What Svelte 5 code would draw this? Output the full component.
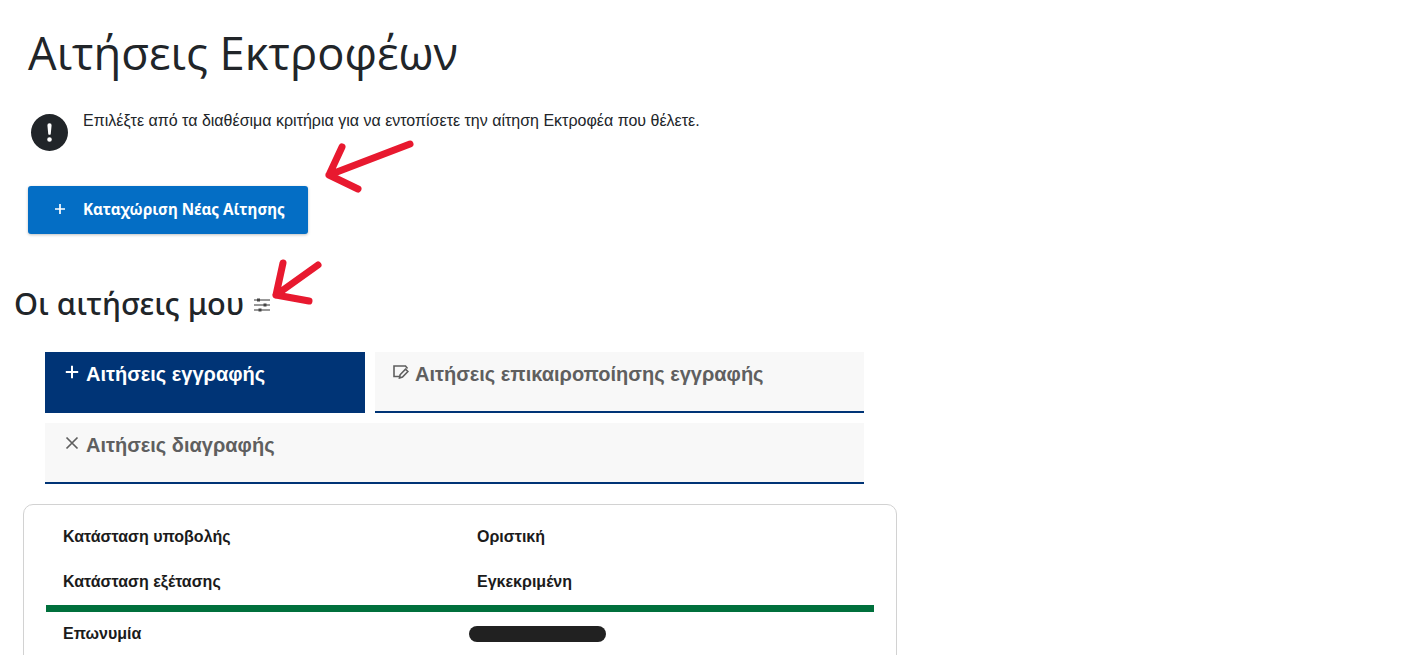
<script>
  const tabs = [
    { label: "Αιτήσεις εγγραφής", icon: "plus", active: true, wide: false },
    { label: "Αιτήσεις επικαιροποίησης εγγραφής", icon: "edit", active: false, wide: false },
    { label: "Αιτήσεις διαγραφής", icon: "x", active: false, wide: true },
  ];
</script>

<div class="page">
  <h1>Αιτήσεις Εκτροφέων</h1>

  <div class="notice">
    <svg class="notice-icon" viewBox="0 0 16 16" width="37" height="37">
      <path fill="#212529" d="M16 8A8 8 0 1 1 0 8a8 8 0 0 1 16 0zM8 4a.905.905 0 0 0-.9.995l.35 3.507a.552.552 0 0 0 1.1 0l.35-3.507A.905.905 0 0 0 8 4zm.002 6a1 1 0 1 0 0 2 1 1 0 0 0 0-2z" />
    </svg>
    <p>Επιλέξτε από τα διαθέσιμα κριτήρια για να εντοπίσετε την αίτηση Εκτροφέα που θέλετε.</p>
  </div>

  <button class="add-btn">
    <svg viewBox="0 0 12 12" width="12" height="12">
      <path d="M6 1v10M1 6h10" stroke="#fff" stroke-width="1.7" fill="none" />
    </svg>
    <span>Καταχώριση Νέας Αίτησης</span>
  </button>

  <h2>
    Οι αιτήσεις μου
    <svg class="sliders" viewBox="0 0 16 14" width="16" height="14">
      <g stroke="#333" stroke-width="1" fill="none">
        <path d="M0 2h16M0 7h16M0 12h16" />
      </g>
      <g fill="#444">
        <rect x="3" y="0.5" width="3" height="3" />
        <rect x="9.5" y="5.5" width="3" height="3" />
        <rect x="4.5" y="10.5" width="3" height="3" />
      </g>
    </svg>
  </h2>

  <div class="tabs">
    {#each tabs as tab}
      <div class="tab" class:active={tab.active} class:wide={tab.wide}>
        {#if tab.icon === "plus"}
          <svg viewBox="0 0 14 14" width="14" height="14">
            <path d="M7 .8v12.4M.8 7h12.4" stroke="#fff" stroke-width="2" fill="none" />
          </svg>
        {:else if tab.icon === "edit"}
          <svg class="edit" viewBox="0 0 16 14" width="16" height="14">
            <path d="M8 11.5H1V1h11.5l2 2.5" stroke="#5f5f5f" stroke-width="1.6" fill="none" />
            <path d="M6.5 13l.6-3.2 5.4-5.6 2.4 2.3-5.4 5.6z" stroke="#5f5f5f" stroke-width="1.6" fill="#f8f8f8" />
          </svg>
        {:else}
          <svg viewBox="0 0 14 14" width="14" height="14">
            <path d="M1.5 1.5l11 11M12.5 1.5l-11 11" stroke="#5f5f5f" stroke-width="1.7" fill="none" />
          </svg>
        {/if}
        <span>{tab.label}</span>
      </div>
    {/each}
  </div>

  <div class="card">
    <div class="row first"><b>Κατάσταση υποβολής</b><b>Οριστική</b></div>
    <div class="row second"><b>Κατάσταση εξέτασης</b><b>Εγκεκριμένη</b></div>
    <div class="status-bar"></div>
    <div class="row last"><b>Επωνυμία</b><span class="redacted"></span></div>
  </div>

  <!-- annotation arrows drawn over the screenshot -->
  <svg class="arrows" viewBox="0 0 1413 655" width="1413" height="655">
    <g stroke="#e8192f" stroke-width="7" stroke-linecap="round" stroke-linejoin="round" fill="none">
      <path d="M410 144L329 175M342 147L329 175L358 189" />
      <path d="M318 265L276 295M283 263L276 295L309 301" />
    </g>
  </svg>
</div>

<style>
  :global(body) {
    margin: 0;
    background: #fff;
  }
  .page {
    position: relative;
    height: 655px;
    overflow: hidden;
    font-family: "Liberation Sans", Arial, sans-serif;
    color: #212529;
  }
  h1 {
    margin: 0;
    padding: 24px 0 0 28px;
    font-family: "Open Sans", sans-serif;
    font-size: 45.3px;
    font-weight: 400;
    line-height: 58px;
  }
  .notice {
    display: flex;
    align-items: flex-start;
    gap: 15px;
    margin: 31px 0 0 31px;
    height: 73px;
  }
  .notice-icon {
    flex: none;
    margin-top: 1px;
  }
  .notice p {
    margin: 0;
    font-size: 16px;
    line-height: 16px;
  }
  .add-btn {
    display: flex;
    align-items: center;
    gap: 17px;
    width: 280px;
    height: 48px;
    margin: 0 0 0 28px;
    padding: 0 0 0 26px;
    border: none;
    border-radius: 3px;
    background: #046ec5;
    color: #fff;
    font-family: "Noto Sans", sans-serif;
    font-size: 15.2px;
    font-weight: 700;
    box-shadow: 0 1px 3px rgba(0, 0, 0, 0.25);
  }
  .add-btn span {
    margin-top: -2px;
  }
  .add-btn svg {
    margin-top: -3px;
  }
  h2 {
    display: flex;
    align-items: center;
    gap: 10px;
    margin: 47px 0 0 14px;
    font-family: "Noto Sans", sans-serif;
    font-size: 30.7px;
    font-weight: 500;
    line-height: 44px;
  }
  .sliders {
    margin-top: 4px;
  }
  .tabs {
    display: grid;
    grid-template-columns: 320px 489px;
    gap: 10px;
    margin: 27px 0 0 45px;
  }
  .tab {
    display: flex;
    align-items: flex-start;
    gap: 7px;
    height: 61px;
    box-sizing: border-box;
    padding: 10px 0 0 20px;
    background: #f8f8f8;
    border-bottom: 2px solid #003476;
    color: #5f5f5f;
    font-size: 20px;
    font-weight: 700;
    line-height: 24px;
  }
  .tab svg {
    margin-top: 3px;
    flex: none;
  }
  .tab svg.edit {
    margin: 3px -1px 0 -2px;
  }
  .tab.active {
    background: #003476;
    color: #fff;
  }
  .tab.wide {
    grid-column: 1 / span 2;
  }
  .card {
    width: 828px;
    height: 200px;
    margin: 20px 0 0 23px;
    border: 1px solid #d2d2d2;
    border-radius: 10px;
    padding: 10px 22px 0;
  }
  .row {
    display: grid;
    grid-template-columns: 414px 1fr;
    align-items: center;
    padding-left: 17px;
    font-size: 16px;
    color: #1b1b1b;
  }
  .row b {
    font-weight: 700;
  }
  .row.first {
    height: 43px;
  }
  .row.second {
    height: 47px;
  }
  .row.last {
    height: 44px;
  }
  .status-bar {
    height: 7px;
    background: #00703c;
  }
  .redacted {
    display: block;
    width: 137px;
    height: 16px;
    margin-left: -8px;
    margin-top: -1px;
    border-radius: 8px;
    background: #212121;
  }
  .arrows {
    position: absolute;
    top: 0;
    left: 0;
    pointer-events: none;
  }
</style>
